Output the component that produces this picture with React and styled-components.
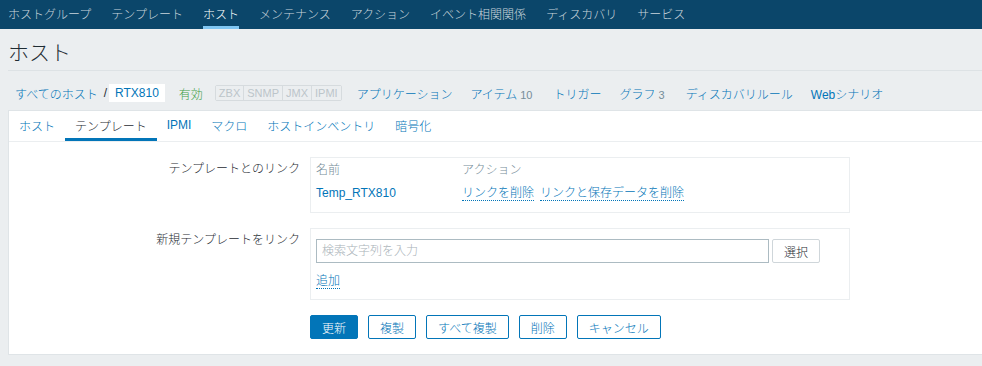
import React from 'react';
import styled, { createGlobalStyle } from 'styled-components';

const GlobalStyle = createGlobalStyle`
  html, body {
    margin: 0;
    padding: 0;
    background: #ebeef0;
    font-family: "Liberation Sans", "Noto Sans CJK JP", sans-serif;
    font-size: 12px;
    font-weight: 300;
    color: #1f2c33;
  }
  * { box-sizing: border-box; }
  button, input { font-weight: 300; }
`;

const TopNav = styled.nav`
  display: flex;
  gap: 20px;
  height: 29px;
  padding-left: 8px;
  background: #0b466a;
`;

const NavItem = styled.a`
  display: flex;
  align-items: center;
  height: 29px;
  padding-top: 3px;
  padding-bottom: 2px;
  color: ${p => (p.$active ? '#ffffff' : '#c9d5dc')};
  border-bottom: 3px solid ${p => (p.$active ? '#80c6f2' : 'transparent')};
  white-space: nowrap;
`;

const Wrapper = styled.div`
  padding-left: 8px;
`;

const Title = styled.h1`
  margin: 0;
  padding: 12px 0 5px;
  font-size: 21px;
  line-height: 24px;
  font-weight: 300;
  color: #1f2c33;
  border-bottom: 1px solid #dde2e5;
`;

const Crumbs = styled.div`
  display: flex;
  align-items: center;
  height: 39px;
  padding: 12px 0 7px 7px;
`;

const Link = styled.a`
  color: #0275b8;
  white-space: nowrap;
  margin-right: ${p => p.$mr ?? 18}px;
`;

const Slash = styled.span`
  margin: 0 1px 0 6px;
  color: #1f2c33;
`;

const Current = styled.span`
  display: flex;
  align-items: center;
  height: 20px;
  padding: 0 6px;
  background: #ffffff;
  color: #0275b8;
  border: 1px solid #ebeef0;
  margin-right: 13px;
`;

const Enabled = styled.span`
  color: #429e47;
  margin-right: 12px;
`;

const Tags = styled.div`
  display: flex;
  height: 16px;
  border: 1px solid #d6dbde;
  border-radius: 2px;
  margin-right: 15px;
`;

const Tag = styled.span`
  display: flex;
  align-items: center;
  padding: 0 3px;
  font-size: 11px;
  color: #bcc5ca;
  background: #ebeef0;
  & + & { border-left: 1px solid #d6dbde; }
`;

const Count = styled.sup`
  vertical-align: baseline;
  font-size: 11px;
  color: #768d99;
  margin: 0 3px 0 3px;
`;

const Panel = styled.section`
  background: #ffffff;
  border: 1px solid #dfe4e7;
  border-right: none;
`;

const Tabs = styled.ul`
  display: flex;
  margin: 0;
  padding: 0;
  list-style: none;
  height: 31px;
  border-bottom: 1px solid #ebeef0;
`;

const TabItem = styled.li`
  display: flex;
  align-items: center;
  padding: 1px 10px 0;
  height: 30px;
  color: ${p => (p.$active ? '#1f2c33' : '#0275b8')};
  border-bottom: 3px solid ${p => (p.$active ? '#0275b8' : 'transparent')};
  white-space: nowrap;
`;

const Form = styled.div`
  display: flex;
  flex-direction: column;
  gap: 15px;
  padding: 15px 0;
`;

const Row = styled.div`
  display: flex;
  align-items: flex-start;
`;

const Label = styled.div`
  width: 301px;
  padding-right: 10px;
  text-align: right;
  line-height: 24px;
  color: #1f2c33;
`;

const Box = styled.div`
  width: 540px;
  border: 1px solid #ebeef0;
  padding: ${p => p.$pad || '0 5px 11px'};
`;

const Table = styled.table`
  border-collapse: collapse;
  width: 100%;
  th, td {
    text-align: left;
    font-weight: 300;
    line-height: 16px;
    padding: 0;
  }
  th {
    color: #768d99;
    padding: 4px 0;
  }
  td {
    padding-top: 3px;
  }
`;

const NameCell = styled.td`
  width: 146px;
  color: #0275b8;
`;

const DotLink = styled.a`
  color: #0275b8;
  border-bottom: 1px dotted #0275b8;
  margin-right: ${p => p.$mr || 0}px;
  white-space: nowrap;
`;

const InputRow = styled.div`
  display: flex;
  gap: 3px;
`;

const Input = styled.input`
  width: 453px;
  height: 24px;
  padding: 0 5px;
  border: 1px solid #acbbc2;
  font: inherit;
  color: #1f2c33;
  outline: none;
  &::placeholder { color: #a9b2b8; }
`;

const SelectButton = styled.button`
  width: 48px;
  height: 24px;
  padding: 0;
  background: #ffffff;
  border: 1px solid #cfd6da;
  border-radius: 2px;
  font: inherit;
  color: #1f2c33;
`;

const AddLine = styled.div`
  margin-top: 10px;
  line-height: 16px;
`;

const Buttons = styled.div`
  display: flex;
  gap: 10px;
  padding-left: 301px;
`;

const Button = styled.button`
  height: 24px;
  padding: 0 11px;
  border: 1px solid #0275b8;
  border-radius: 2px;
  font: inherit;
  background: ${p => (p.$primary ? '#0275b8' : '#ffffff')};
  color: ${p => (p.$primary ? '#ffffff' : '#0275b8')};
`;

const navItems = ['ホストグループ', 'テンプレート', 'ホスト', 'メンテナンス', 'アクション', 'イベント相関関係', 'ディスカバリ', 'サービス'];
const tabs = ['ホスト', 'テンプレート', 'IPMI', 'マクロ', 'ホストインベントリ', '暗号化'];

export default function App() {
  return (
    <>
      <GlobalStyle />
      <TopNav>
        {navItems.map(n => (
          <NavItem key={n} $active={n === 'ホスト'}>{n}</NavItem>
        ))}
      </TopNav>
      <Wrapper>
        <Title>ホスト</Title>
        <Crumbs>
          <Link $mr={0}>すべてのホスト</Link>
          <Slash>/</Slash>
          <Current>RTX810</Current>
          <Enabled>有効</Enabled>
          <Tags>
            <Tag>ZBX</Tag>
            <Tag>SNMP</Tag>
            <Tag>JMX</Tag>
            <Tag>IPMI</Tag>
          </Tags>
          <Link>アプリケーション</Link>
          <Link>アイテム<Count>10</Count></Link>
          <Link>トリガー</Link>
          <Link>グラフ<Count>3</Count></Link>
          <Link>ディスカバリルール</Link>
          <Link>Webシナリオ</Link>
        </Crumbs>
        <Panel>
          <Tabs>
            {tabs.map(t => (
              <TabItem key={t} $active={t === 'テンプレート'}>{t}</TabItem>
            ))}
          </Tabs>
          <Form>
            <Row>
              <Label>テンプレートとのリンク</Label>
              <Box>
                <Table>
                  <thead>
                    <tr>
                      <th>名前</th>
                      <th>アクション</th>
                    </tr>
                  </thead>
                  <tbody>
                    <tr>
                      <NameCell>Temp_RTX810</NameCell>
                      <td>
                        <DotLink $mr={6}>リンクを削除</DotLink>
                        <DotLink>リンクと保存データを削除</DotLink>
                      </td>
                    </tr>
                  </tbody>
                </Table>
              </Box>
            </Row>
            <Row>
              <Label>新規テンプレートをリンク</Label>
              <Box $pad="10px 5px">
                <InputRow>
                  <Input placeholder="検索文字列を入力" />
                  <SelectButton>選択</SelectButton>
                </InputRow>
                <AddLine>
                  <DotLink>追加</DotLink>
                </AddLine>
              </Box>
            </Row>
            <Buttons>
              <Button $primary>更新</Button>
              <Button>複製</Button>
              <Button>すべて複製</Button>
              <Button>削除</Button>
              <Button>キャンセル</Button>
            </Buttons>
          </Form>
        </Panel>
      </Wrapper>
    </>
  );
}
